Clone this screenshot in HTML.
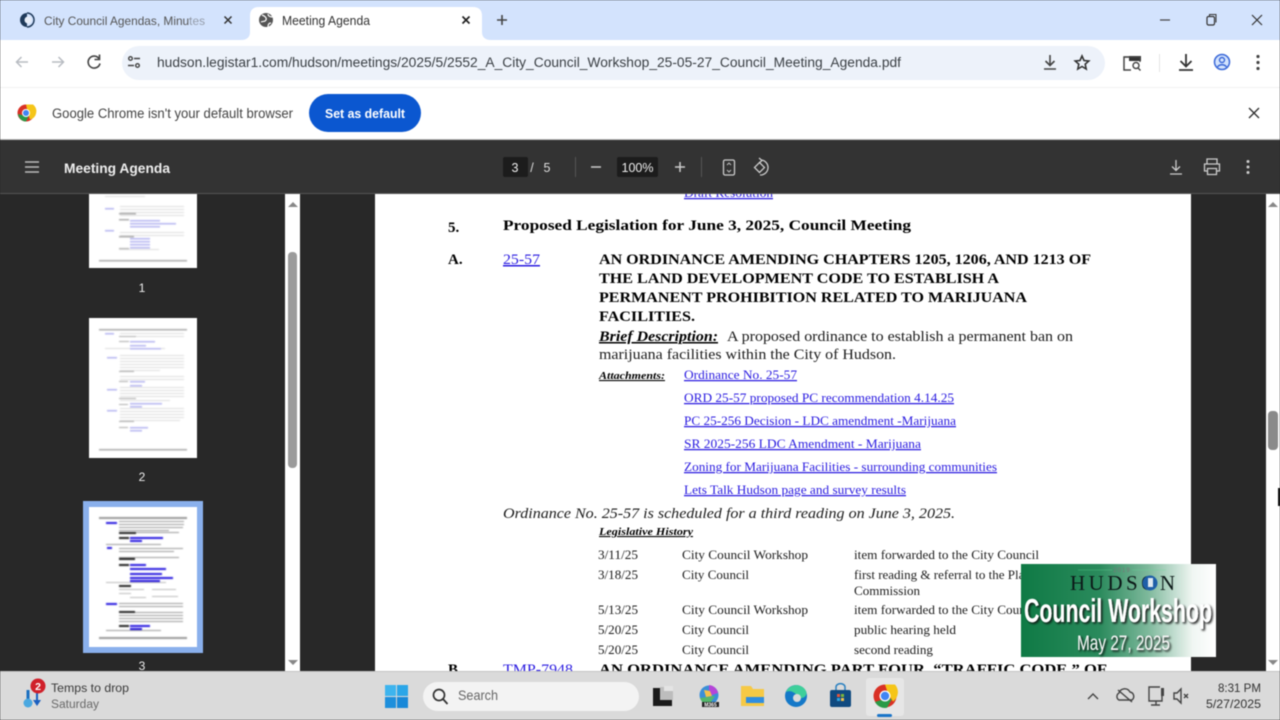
<!DOCTYPE html>
<html><head><meta charset="utf-8"><title>Meeting Agenda</title>
<style>
html,body{margin:0;padding:0;width:1280px;height:720px;overflow:hidden;background:#282828}
svg{display:block;filter:blur(.6px)}
text{font-family:"Liberation Sans",sans-serif}
.d{fill:#1c1c1c;font-size:12.5px;font-family:"Liberation Serif",serif}
.b{fill:#000;font-size:15px;font-weight:bold;font-family:"Liberation Serif",serif}
.l{fill:#2a1be0;font-size:12.5px;font-family:"Liberation Serif",serif;text-decoration:underline}
.ic{fill:none;stroke:#444;stroke-width:1.4}
.iw{fill:none;stroke:#ccc;stroke-width:1.3}
.th{filter:blur(.5px)}
</style></head><body>
<svg width="1280" height="720" viewBox="0 0 1280 720" xmlns="http://www.w3.org/2000/svg">
<defs>
<linearGradient id="g" x1="0" x2="1" y1="0" y2="0"><stop offset="0" stop-color="#0f7a45"/><stop offset=".4" stop-color="#2a8a5c"/><stop offset=".65" stop-color="#7db89b"/><stop offset=".88" stop-color="#f0f6f3"/><stop offset="1" stop-color="#fff"/></linearGradient>
<filter id="sh" x="-5%" y="-20%" width="110%" height="140%"><feDropShadow dx="1.5" dy="1.5" stdDeviation="1" flood-color="#111" flood-opacity=".95"/></filter>
</defs>
<rect width="1280" height="720" fill="#282828"/>

<!-- PDF page -->
<rect x="375" y="190" width="816" height="490" fill="#fff"/>
<text x="684" y="197" class="l" textLength="89" lengthAdjust="spacingAndGlyphs">Draft Resolution</text>
<text x="503" y="230" class="b" textLength="408" lengthAdjust="spacingAndGlyphs">Proposed Legislation for June 3, 2025, Council Meeting</text>
<text x="448" y="232" class="b">5.</text>
<text x="448" y="264" class="b">A.</text>
<text x="503" y="264" class="l" style="font-size:15px" textLength="37" lengthAdjust="spacingAndGlyphs">25-57</text>
<text x="599" y="264" class="b" textLength="492" lengthAdjust="spacingAndGlyphs">AN ORDINANCE AMENDING CHAPTERS 1205, 1206, AND 1213 OF</text>
<text x="599" y="283" class="b" textLength="400" lengthAdjust="spacingAndGlyphs">THE LAND DEVELOPMENT CODE TO ESTABLISH A</text>
<text x="599" y="302" class="b" textLength="428" lengthAdjust="spacingAndGlyphs">PERMANENT PROHIBITION RELATED TO MARIJUANA</text>
<text x="599" y="321" class="b" textLength="96" lengthAdjust="spacingAndGlyphs">FACILITIES.</text>
<text x="599" y="341" class="b" style="font-style:italic;text-decoration:underline" textLength="119" lengthAdjust="spacingAndGlyphs">Brief Description:</text>
<text x="727" y="341" class="d" style="font-size:15px" textLength="346" lengthAdjust="spacingAndGlyphs">A proposed ordinance to establish a permanent ban on</text>
<text x="599" y="359" class="d" style="font-size:15px" textLength="297" lengthAdjust="spacingAndGlyphs">marijuana facilities within the City of Hudson.</text>
<text x="599" y="379" class="b" style="font-size:11px;font-style:italic;text-decoration:underline" textLength="66" lengthAdjust="spacingAndGlyphs">Attachments:</text>
<text x="684" y="379" class="l" textLength="113" lengthAdjust="spacingAndGlyphs">Ordinance No. 25-57</text>
<text x="684" y="402" class="l" textLength="270" lengthAdjust="spacingAndGlyphs">ORD 25-57 proposed PC recommendation 4.14.25</text>
<text x="684" y="425" class="l" textLength="272" lengthAdjust="spacingAndGlyphs">PC 25-256 Decision - LDC amendment -Marijuana</text>
<text x="684" y="448" class="l" textLength="237" lengthAdjust="spacingAndGlyphs">SR 2025-256  LDC Amendment - Marijuana</text>
<text x="684" y="471" class="l" textLength="313" lengthAdjust="spacingAndGlyphs">Zoning for Marijuana Facilities - surrounding communities</text>
<text x="684" y="494" class="l" textLength="222" lengthAdjust="spacingAndGlyphs">Lets Talk Hudson page and survey results</text>
<text x="503" y="518" class="d" style="font-size:15px;font-style:italic" textLength="452" lengthAdjust="spacingAndGlyphs">Ordinance No. 25-57 is scheduled for a third reading on June 3, 2025.</text>
<text x="599" y="535" class="b" style="font-size:11px;font-style:italic;text-decoration:underline" textLength="94" lengthAdjust="spacingAndGlyphs">Legislative History</text>
<text x="598" y="559" class="d" textLength="40" lengthAdjust="spacingAndGlyphs">3/11/25</text>
<text x="682" y="559" class="d" textLength="126" lengthAdjust="spacingAndGlyphs">City Council Workshop</text>
<text x="854" y="559" class="d" textLength="185" lengthAdjust="spacingAndGlyphs">item forwarded to the City Council</text>
<text x="598" y="579" class="d" textLength="40" lengthAdjust="spacingAndGlyphs">3/18/25</text>
<text x="682" y="579" class="d" textLength="67" lengthAdjust="spacingAndGlyphs">City Council</text>
<text x="854" y="579" class="d" textLength="200" lengthAdjust="spacingAndGlyphs">first reading &amp; referral to the Planning</text>
<text x="854" y="595" class="d" textLength="66" lengthAdjust="spacingAndGlyphs">Commission</text>
<text x="598" y="614" class="d" textLength="40" lengthAdjust="spacingAndGlyphs">5/13/25</text>
<text x="682" y="614" class="d" textLength="126" lengthAdjust="spacingAndGlyphs">City Council Workshop</text>
<text x="854" y="614" class="d" textLength="185" lengthAdjust="spacingAndGlyphs">item forwarded to the City Council</text>
<text x="598" y="634" class="d" textLength="40" lengthAdjust="spacingAndGlyphs">5/20/25</text>
<text x="682" y="634" class="d" textLength="67" lengthAdjust="spacingAndGlyphs">City Council</text>
<text x="854" y="634" class="d" textLength="102" lengthAdjust="spacingAndGlyphs">public hearing held</text>
<text x="598" y="654" class="d" textLength="40" lengthAdjust="spacingAndGlyphs">5/20/25</text>
<text x="682" y="654" class="d" textLength="67" lengthAdjust="spacingAndGlyphs">City Council</text>
<text x="854" y="654" class="d" textLength="79" lengthAdjust="spacingAndGlyphs">second reading</text>
<text x="448" y="674" class="b">B.</text>
<text x="503" y="674" class="l" style="font-size:15px" textLength="70" lengthAdjust="spacingAndGlyphs">TMP-7948</text>
<text x="599" y="674" class="b" textLength="508" lengthAdjust="spacingAndGlyphs">AN ORDINANCE AMENDING PART FOUR, “TRAFFIC CODE,” OF</text>

<!-- sidebar thumbs -->
<rect x="89" y="190" width="108" height="78" fill="#fff"/>
<g class="th">
<g fill="#ddd">
<rect x="105" y="196" width="40" height="1"/><rect x="120" y="206" width="64" height="1"/><rect x="120" y="209" width="64" height="1"/><rect x="120" y="212" width="64" height="1"/>
<rect x="120" y="215" width="64" height="1"/><rect x="120" y="232" width="64" height="1"/><rect x="120" y="235" width="64" height="1"/>
<rect x="119" y="249" width="40" height="1"/>
</g>
<g fill="#aaa"><rect x="119" y="213" width="17" height="1.5"/><rect x="119" y="219" width="10" height="1.5"/><rect x="119" y="236" width="15" height="1.5"/><rect x="119" y="248" width="10" height="1"/><rect x="99" y="260" width="88" height="1.5"/></g>
<g fill="#b4b4f0"><rect x="105" y="208" width="9" height="1.5"/><rect x="105" y="230" width="9" height="1.5"/><rect x="130" y="220" width="30" height="1.5"/><rect x="130" y="223" width="46" height="1.5"/><rect x="130" y="226" width="30" height="1.5"/><rect x="130" y="238" width="20" height="1.5"/><rect x="130" y="241" width="20" height="1.5"/><rect x="130" y="244" width="20" height="1.5"/><rect x="130" y="247" width="20" height="1.5"/></g>
</g>

<rect x="89" y="318" width="108" height="140" fill="#fff"/>
<g class="th">
<g fill="#ddd">
<rect x="120" y="333" width="64" height="1"/><rect x="120" y="336" width="64" height="1"/>
<rect x="120" y="355" width="64" height="1"/><rect x="120" y="358" width="64" height="1"/><rect x="120" y="361" width="64" height="1"/><rect x="120" y="364" width="64" height="1"/><rect x="120" y="367" width="64" height="1"/><rect x="120" y="370" width="40" height="1"/>
<rect x="120" y="376" width="64" height="1"/><rect x="120" y="379" width="64" height="1"/>
<rect x="120" y="387" width="64" height="1"/><rect x="120" y="390" width="64" height="1"/><rect x="120" y="393" width="64" height="1"/><rect x="120" y="396" width="64" height="1"/><rect x="120" y="400" width="50" height="1"/>
<rect x="120" y="408" width="64" height="1"/><rect x="120" y="411" width="64" height="1"/><rect x="120" y="414" width="64" height="1"/><rect x="120" y="417" width="64" height="1"/><rect x="120" y="420" width="60" height="1"/>
<rect x="105" y="348" width="60" height="1"/>
</g>
<g fill="#aaa"><rect x="99" y="329" width="88" height="1.5"/><rect x="119" y="336" width="17" height="1"/><rect x="119" y="341" width="10" height="1"/><rect x="119" y="371" width="15" height="1"/><rect x="119" y="381" width="9" height="1"/><rect x="119" y="398" width="17" height="1"/><rect x="119" y="404" width="9" height="1"/><rect x="119" y="421" width="15" height="1"/><rect x="119" y="427" width="9" height="1"/><rect x="99" y="449" width="88" height="1.5"/></g>
<g fill="#b4b4f0"><rect x="105" y="333" width="9" height="1.5"/><rect x="107" y="357" width="10" height="1.5"/><rect x="107" y="389" width="10" height="1.5"/><rect x="107" y="410" width="10" height="1.5"/><rect x="130" y="341" width="25" height="1.5"/><rect x="130" y="345" width="16" height="1.5"/><rect x="130" y="348" width="31" height="1.5"/><rect x="130" y="381" width="15" height="1.5"/><rect x="130" y="385" width="12" height="1.5"/><rect x="130" y="403" width="32" height="1.5"/><rect x="130" y="406" width="12" height="1.5"/><rect x="130" y="427" width="18" height="1.5"/><rect x="130" y="430" width="12" height="1.5"/></g>
</g>

<text x="142" y="292" fill="#eee" font-size="12" text-anchor="middle">1</text>
<text x="142" y="481" fill="#eee" font-size="12" text-anchor="middle">2</text>
<text x="142" y="670" fill="#eee" font-size="12" text-anchor="middle">3</text>

<rect x="83" y="501" width="120" height="152" fill="#8ab0ec"/>
<rect x="89" y="507" width="108" height="140" fill="#fff"/>
<g class="th">
<g fill="#999">
<rect x="99" y="517" width="88" height="2"/>
<rect x="119" y="521" width="65" height="1"/><rect x="119" y="524" width="65" height="1"/><rect x="119" y="527" width="64" height="1"/><rect x="119" y="530" width="50" height="1"/><rect x="119" y="532" width="60" height="1"/>
<rect x="106" y="544" width="55" height="1"/><rect x="119" y="548" width="64" height="1"/><rect x="119" y="551" width="55" height="1"/><rect x="119" y="557" width="60" height="1"/>
<rect x="119" y="603" width="64" height="1"/><rect x="119" y="606" width="64" height="1"/><rect x="119" y="612" width="64" height="1"/><rect x="119" y="615" width="64" height="1"/><rect x="119" y="618" width="64" height="1"/><rect x="119" y="621" width="64" height="1"/>
<rect x="106" y="630" width="55" height="1"/>
<rect x="99" y="637" width="88" height="2"/>
</g>
<g fill="#bbb"><rect x="106" y="582" width="60" height="1"/><rect x="119" y="589" width="12" height="1"/><rect x="130" y="589" width="14" height="1"/><rect x="152" y="589" width="24" height="1"/><rect x="119" y="593" width="12" height="1"/><rect x="130" y="597" width="16" height="1"/><rect x="152" y="596" width="26" height="1"/></g>
<g fill="#222"><rect x="119" y="532" width="17" height="2"/><rect x="119" y="537" width="10" height="2"/><rect x="119" y="558" width="16" height="2"/><rect x="119" y="564" width="10" height="2"/><rect x="119" y="585" width="12" height="2"/><rect x="119" y="611" width="16" height="2"/><rect x="119" y="625" width="10" height="2"/></g>
<g fill="#2a1be0"><rect x="106" y="522" width="11" height="2"/><rect x="107" y="547" width="5" height="2"/><rect x="130" y="537" width="33" height="2"/><rect x="130" y="540" width="12" height="2"/><rect x="130" y="564" width="16" height="2"/><rect x="130" y="568" width="36" height="2"/><rect x="130" y="573" width="32" height="2"/><rect x="130" y="577" width="43" height="2"/><rect x="130" y="580" width="30" height="2"/><rect x="106" y="603" width="11" height="2"/><rect x="130" y="625" width="20" height="2"/><rect x="130" y="628" width="12" height="2"/></g>
</g>

<!-- scrollbars -->
<rect x="285" y="194" width="15" height="477" fill="#fff"/>
<rect x="288" y="252" width="9" height="216" rx="4" fill="#9b9b9b"/>
<path d="M288 207l5-5 5 5zM288 660l5 5 5-5z" fill="#888"/>
<rect x="1266" y="194" width="14" height="477" fill="#fff"/>
<rect x="1268" y="411" width="10" height="39" rx="4" fill="#8a8a8a"/>
<path d="M1268 207l5-5 5 5zM1268 660l5 5 5-5z" fill="#888"/>
<rect x="1278" y="488" width="2" height="18" fill="#111"/>

<!-- video overlay -->
<rect x="1021" y="564" width="195" height="93" fill="url(#g)"/>
<text x="1122" y="572" font-size="6" fill="#777" text-anchor="middle" letter-spacing="1">2019</text>
<path d="M1078 570h34M1132 570h34" stroke="#6d9" stroke-width=".6" opacity=".6"/>
<text x="1070" y="590" font-size="21" fill="#0c1818" textLength="105" style="font-family:'Liberation Serif',serif">HUDSON</text>
<circle cx="1150" cy="583" r="7.500" fill="#1f5fa8"/><rect x="1148" y="578" width="5" height="9" fill="#dfe8f0"/>
<text x="1024" y="622" font-size="33" font-weight="bold" fill="#fff" filter="url(#sh)" textLength="188" lengthAdjust="spacingAndGlyphs">Council Workshop</text>
<text x="1077" y="650" font-size="21" fill="#f4f4f4" filter="url(#sh)" textLength="93" lengthAdjust="spacingAndGlyphs">May 27, 2025</text>

<!-- taskbar -->
<rect y="671" width="1280" height="49" fill="#dadada"/>
<rect y="671" width="1280" height="1" fill="#c4c4c4"/>
<path d="M28 690v14" stroke="#1a6fc0" stroke-width="3"/><circle cx="28" cy="703" r="4.500" fill="#4aa8e0"/>
<path d="M37 690v12" stroke="#1a5fc0" stroke-width="2"/><path d="M33 700l4 6 4-6z" fill="#1a5fc0"/>
<circle cx="38" cy="686" r="7.500" fill="#d0202a"/><text x="38" y="690" font-size="10.500" fill="#fff" font-weight="bold" text-anchor="middle">2</text>
<text x="51" y="692" font-size="12" fill="#3a3a3a" textLength="78" lengthAdjust="spacingAndGlyphs">Temps to drop</text>
<text x="51" y="708" font-size="11.500" fill="#6a6a6a" textLength="48" lengthAdjust="spacingAndGlyphs">Saturday</text>
<rect x="385" y="685" width="11" height="11" fill="#3db4ee"/><rect x="397" y="685" width="11" height="11" fill="#2aa6e8"/><rect x="385" y="697" width="11" height="11" fill="#1d8fdc"/><rect x="397" y="697" width="11" height="11" fill="#1888d8"/>
<rect x="423" y="682" width="216" height="29" rx="14.500" fill="#f3f3f3"/>
<circle cx="439" cy="695" r="5.500" fill="none" stroke="#333" stroke-width="1.700"/><path d="M443 699l4.500 5" stroke="#333" stroke-width="1.800"/>
<text x="458" y="700" font-size="14" fill="#666" textLength="40" lengthAdjust="spacingAndGlyphs">Search</text>
<rect x="653" y="688" width="19" height="18" fill="#1a1a1a"/><rect x="660" y="687" width="13" height="13" fill="#bdbdbd"/><rect x="664" y="686" width="9" height="5" fill="#e4e4e4"/>
<circle cx="709" cy="695" r="9.500" fill="#3a8fd8"/><path d="M709 685a10 10 0 0 1 9 8l-9 3z" fill="#b545d8"/><path d="M700 698a10 10 0 0 0 9 7l6-9z" fill="#54b86c"/><path d="M704 690l6 1 2 5-6 1z" fill="#f3c14a"/>
<rect x="702" y="702" width="17" height="5" fill="#222"/><text x="710.500" y="706.500" font-size="5" fill="#fff" text-anchor="middle" font-weight="bold">M365</text>
<path d="M741 686h10l2 3h11v17h-23z" fill="#f6c945"/><rect x="746" y="697" width="18" height="6" fill="#2f8ee0"/>
<circle cx="796" cy="696" r="11" fill="#1478c8"/><path d="M786 692a11 11 0 0 1 20-1c2 5-3 8-7 7-2-4-8-9-13-6z" fill="#3ecf9a"/><circle cx="797" cy="698" r="4" fill="#dadada"/>
<rect x="830" y="690" width="21" height="17" rx="2" fill="#0f4a80"/><path d="M836 690v-3a4 3 0 0 1 9 0v3" fill="none" stroke="#2a80c0" stroke-width="1.500"/>
<rect x="837" y="694" width="3" height="3" fill="#e8553a"/><rect x="841" y="694" width="3" height="3" fill="#7cb83a"/><rect x="837" y="698" width="3" height="3" fill="#2ea4e0"/><rect x="841" y="698" width="3" height="3" fill="#f3c14a"/>
<rect x="866" y="678" width="38" height="38" rx="3" fill="#e6e6e6"/>
<circle cx="885" cy="696" r="11.500" fill="#d93025"/><path d="M875 702a11.500 11.500 0 0 0 12 5.800l5-9h-7z" fill="#2a9a47"/><path d="M885 684.500h10a11.500 11.500 0 0 1-2 17l-5-8z" fill="#f5c518"/><circle cx="885" cy="696" r="5.500" fill="#fff"/><circle cx="885" cy="696" r="4.200" fill="#4285f4"/>
<rect x="877" y="714" width="15" height="3" rx="1.500" fill="#1a74c8"/>
<path d="M1088 699l5-5 5 5" class="ic"/>
<path d="M1119 700a4 4 0 0 1 0-7 6 6 0 0 1 11-1 4.500 4.500 0 0 1 2 8zM1118 690l14 12" class="ic" stroke-width="1.800"/>
<path d="M1160 687h-11v14h13v-5M1156 701v4M1151 705h9" class="ic"/><rect x="1161" y="688" width="3" height="8" fill="#444"/>
<path d="M1174 693h3l4-4v14l-4-4h-3zM1184 694l4 4M1188 694l-4 4" class="ic" stroke-width="1.200"/>
<text x="1261" y="692" font-size="12" fill="#333" text-anchor="end" textLength="43" lengthAdjust="spacingAndGlyphs">8:31 PM</text>
<text x="1261" y="708" font-size="12" fill="#333" text-anchor="end" textLength="55" lengthAdjust="spacingAndGlyphs">5/27/2025</text>

<!-- chrome -->
<rect width="1280" height="40" fill="#d3e3fd"/>
<rect y="40" width="1280" height="48" fill="#fff"/>
<path d="M241 40c6 0 9-3 9-8V16q0-9 9-9h214q9 0 9 9v16c0 5 3 8 9 8z" fill="#fff"/>
<path d="M27 13a7 7 0 0 0 0 14z" fill="#1f3a5a"/><path d="M27 13a7 7 0 0 1 0 14" fill="none" stroke="#1f3a5a" stroke-width="1.500"/><circle cx="28" cy="20" r="3.500" fill="#e8eef8"/>
<text x="44" y="25" font-size="12" fill="#555" textLength="161" lengthAdjust="spacingAndGlyphs">City Council Agendas, Minutes</text>
<rect x="190" y="10" width="16" height="20" fill="#d3e3fd" opacity=".5"/>
<path d="M224.500 16.500l7 7M231.500 16.500l-7 7" stroke="#333" stroke-width="1.500"/>
<circle cx="266" cy="20" r="7" fill="#555"/><path d="M262 15c3 1 5 3 4 5s-3 1-5 2M268 27c0-3 1-4 3-4M268 14c0 2 2 3 5 3" stroke="#fff" fill="none" stroke-width="1.200"/>
<text x="282" y="25" font-size="12.500" fill="#333" textLength="88" lengthAdjust="spacingAndGlyphs">Meeting Agenda</text>
<path d="M462.500 16.500l7 7M469.500 16.500l-7 7" stroke="#222" stroke-width="1.700"/>
<path d="M502 15v10M497 20h10" stroke="#444" stroke-width="1.600"/>
<path d="M1160 20h10" stroke="#444" stroke-width="1.200"/>
<rect x="1207" y="16.500" width="7.500" height="8.500" rx="1.500" fill="none" stroke="#333" stroke-width="1.200"/><path d="M1209.500 16v-1.500h6.500v8" fill="none" stroke="#333" stroke-width="1"/>
<path d="M1252 15l10 10M1262 15l-10 10" stroke="#333" stroke-width="1.200"/>

<path d="M28 62H17M21.500 57l-5 5 5 5" fill="none" stroke="#b8bcc2" stroke-width="1.500"/>
<path d="M52 62h11M58.500 57l5 5-5 5" fill="none" stroke="#b8bcc2" stroke-width="1.500"/>
<path d="M99 58.500a6 6 0 1 0 1 5M99.500 54.500v5h-5" fill="none" stroke="#444" stroke-width="1.600"/>
<rect x="122" y="46" width="983" height="34" rx="17" fill="#edf2fa"/>
<g stroke="#444" stroke-width="1.400" fill="none"><circle cx="130.500" cy="58.500" r="1.800"/><path d="M134 58.500h6M128 65.500h6"/><circle cx="137.500" cy="65.500" r="1.800"/></g>
<text x="157" y="67" font-size="13.500" fill="#3a3f44" textLength="744" lengthAdjust="spacingAndGlyphs">hudson.legistar1.com/hudson/meetings/2025/5/2552_A_City_Council_Workshop_25-05-27_Council_Meeting_Agenda.pdf</text>
<path d="M1050 55v10M1045.500 61l4.500 4.500 4.500-4.500M1044 69h12" fill="none" stroke="#444" stroke-width="1.600"/>
<path d="M1082 56l2 4.500 4.800.5-3.600 3.200 1 4.800-4.200-2.500-4.200 2.500 1-4.800-3.600-3.200 4.800-.5z" fill="none" stroke="#333" stroke-width="1.600"/>
<path d="M1129 57h-5v13h7" fill="none" stroke="#444" stroke-width="1.500"/><rect x="1129" y="56" width="12" height="5" fill="#333"/><path d="M1124 57h16v5" fill="none" stroke="#444" stroke-width="1.200"/><circle cx="1136" cy="65.500" r="3" fill="none" stroke="#444" stroke-width="1.400"/><path d="M1138 68l2.500 2.500" stroke="#444" stroke-width="1.400"/>
<rect x="1159" y="54" width="1" height="18" fill="#e3e3e3"/>
<path d="M1186 54v12M1180.500 61l5.500 5.500 5.500-5.500M1179 70h14" fill="none" stroke="#333" stroke-width="1.800"/>
<circle cx="1222" cy="62" r="7.500" fill="#d3e3fd" stroke="#3a68d8" stroke-width="1.500"/><circle cx="1222" cy="60" r="2.500" fill="none" stroke="#3a68d8" stroke-width="1.400"/><path d="M1217.500 67a5 4 0 0 1 9 0" fill="none" stroke="#3a68d8" stroke-width="1.400"/>
<g fill="#444"><circle cx="1258" cy="56.500" r="1.600"/><circle cx="1258" cy="62.500" r="1.600"/><circle cx="1258" cy="68.500" r="1.600"/></g>

<rect y="88" width="1280" height="51" fill="#fff"/>
<rect y="87" width="1280" height="1" fill="#f2f2f2"/>
<circle cx="26" cy="113" r="8.500" fill="#d93025"/><path d="M18 114a8.500 8.500 0 0 0 8 7.500l3-6h-5z" fill="#2a9a47"/><path d="M26 104.500h7a8.500 8.500 0 0 1-3 15l-2-6z" fill="#f5c518"/><circle cx="26" cy="113" r="4" fill="#fff"/><circle cx="26" cy="113" r="3" fill="#4285f4"/>
<text x="52" y="118" font-size="13.500" fill="#444" textLength="241" lengthAdjust="spacingAndGlyphs">Google Chrome isn't your default browser</text>
<rect x="309" y="94" width="112" height="38" rx="19" fill="#0b57d0"/>
<text x="325" y="118" font-size="13" font-weight="bold" fill="#fff" textLength="80" lengthAdjust="spacingAndGlyphs">Set as default</text>
<path d="M1249 108l10 10M1259 108l-10 10" stroke="#333" stroke-width="1.400"/>

<rect y="139" width="1280" height="1" fill="#bbb"/>
<rect y="140" width="1280" height="54" fill="#333"/>
<rect y="193" width="1280" height="1" fill="#555"/>
<path d="M25 162h14M25 167h14M25 172h14" stroke="#bbb" stroke-width="1.500"/>
<text x="64" y="173" font-size="14" font-weight="bold" fill="#eee" textLength="106" lengthAdjust="spacingAndGlyphs">Meeting Agenda</text>
<rect x="503" y="157" width="25" height="20" rx="2" fill="#1c1c1c"/>
<text x="515" y="172" font-size="12.500" fill="#eee" text-anchor="middle">3</text>
<text x="532" y="172" font-size="12.500" fill="#ddd" text-anchor="middle">/</text>
<text x="547" y="172" font-size="12.500" fill="#ddd" text-anchor="middle">5</text>
<rect x="575" y="157" width="1" height="20" fill="#555"/>
<path d="M591 167h10" stroke="#ccc" stroke-width="1.500"/>
<rect x="617" y="157" width="41" height="20" rx="2" fill="#1c1c1c"/>
<text x="637.500" y="172" font-size="12.500" fill="#eee" text-anchor="middle">100%</text>
<path d="M675 167h10M680 162v10" stroke="#ccc" stroke-width="1.500"/>
<rect x="701" y="157" width="1" height="20" fill="#555"/>
<rect x="723.500" y="160" width="11" height="15" rx="1.500" class="iw"/><path d="M727 165l2-2 2 2M727 170l2 2 2-2" stroke="#bbb" fill="none"/>
<path d="M761 160a7.500 7.500 0 1 1-1 15" class="iw"/><path d="M759 158l3 2.500-3 2.500" class="iw"/><path d="M759.500 162.500l5 5-5 5-5-5z" class="iw"/>
<path d="M1176 160v10M1172 166.500l4 4 4-4M1170 174h12" class="iw"/>
<path d="M1207 164v-5h10v5M1207 171h-2.500v-7h15v7H1217M1207.500 168.500h9v6h-9z" class="iw"/>
<g fill="#ccc"><circle cx="1248" cy="161.500" r="1.500"/><circle cx="1248" cy="167" r="1.500"/><circle cx="1248" cy="172.500" r="1.500"/></g>
</svg>
</body></html>
